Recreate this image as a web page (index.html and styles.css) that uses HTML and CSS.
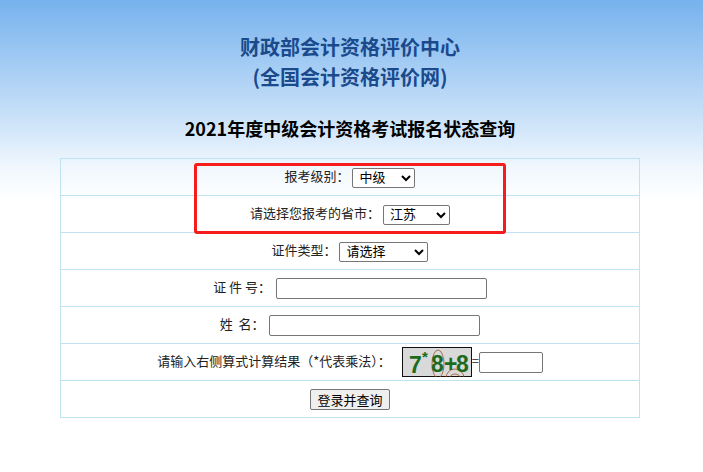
FILE: index.html
```html
<!DOCTYPE html>
<html lang="zh-CN">
<head>
    <meta charset="UTF-8">
    <title>2021年度中级会计资格考试报名状态查询</title>
    <link rel="stylesheet" href="styles.css">
</head>
<body>
    <div class="header">
        <h1>财政部会计资格评价中心</h1>
        <h1>(全国会计资格评价网)</h1>
        <h2>2021年度中级会计资格考试报名状态查询</h2>
    </div>

    <div class="form-wrap">
        <table class="form">
            <tr>
                <td>报考级别：
                    <select class="sel sel-level"><option>中级</option></select>
                </td>
            </tr>
            <tr>
                <td>请选择您报考的省市：
                    <select class="sel sel-prov"><option>江苏</option></select>
                </td>
            </tr>
            <tr>
                <td>证件类型：
                    <select class="sel sel-type"><option>请选择</option></select>
                </td>
            </tr>
            <tr>
                <td>证 件 号：
                    <input type="text" class="txt">
                </td>
            </tr>
            <tr>
                <td>姓&nbsp;&nbsp;名：
                    <input type="text" class="txt">
                </td>
            </tr>
            <tr>
                <td>请输入右侧算式计算结果（*代表乘法）：
                    <svg class="captcha" width="70" height="30" viewBox="0 0 70 30">
                        <rect x="0.5" y="0.5" width="69" height="29" fill="#d9d9d9" stroke="#111"/>
                        <ellipse cx="36" cy="17" rx="6" ry="14" fill="none" stroke="#a0522d" stroke-width="0.8"/>
                        <ellipse cx="53" cy="31" rx="9" ry="9" fill="none" stroke="#a0522d" stroke-width="0.8"/>
                        <ellipse cx="53" cy="33" rx="6" ry="6" fill="none" stroke="#a0522d" stroke-width="0.8"/>
                        <text x="7" y="26" class="cap-txt">7</text>
                        <text x="20" y="15" class="cap-star">*</text>
                        <text x="29" y="25" class="cap-txt">8</text>
                        <text x="42" y="25" class="cap-txt">+</text>
                        <text x="54" y="25" class="cap-txt">8</text>
                    </svg>=<input type="text" class="txt txt-code">
                </td>
            </tr>
            <tr>
                <td><button class="btn">登录并查询</button></td>
            </tr>
        </table>
        <div class="highlight"></div>
    </div>
</body>
</html>
```
FILE: styles.css
```css
body {
    margin: 0;
    padding-right: 3px;
    font-family: "Noto Sans CJK SC", "DejaVu Sans", sans-serif;
    font-size: 13px;
    color: #222;
    background: #fff linear-gradient(#76b2ed, #c4def8 110px, #f2f8fe 170px, #fff 200px) no-repeat;
    background-size: 100% 200px;
    min-height: 472px;
}
.header {
    padding-top: 32px;
    text-align: center;
}
.header h1 {
    margin: 0;
    font-size: 20px;
    line-height: 30px;
    color: #1a4a8c;
}
.header h2 {
    margin: 21px 0 15px;
    font-size: 18px;
    line-height: 30px;
    color: #000;
}
.form-wrap {
    position: relative;
    width: 580px;
    margin: 0 auto;
}
.form {
    width: 580px;
    border-collapse: collapse;
    border: 1px solid #bfe3f3;
}
.form td {
    height: 36px;
    padding: 0;
    text-align: center;
    border: 1px solid #bfe3f3;
    vertical-align: middle;
}
.sel {
    height: 20px;
    box-sizing: border-box;
    font-family: "Liberation Sans", "Noto Sans CJK SC", sans-serif;
    font-size: 13px;
    padding: 0 0 0 2px;
    border: 1px solid #767676;
    border-radius: 2px;
    background: #fff;
    color: #000;
    vertical-align: middle;
}
.sel-level { width: 63px; }
.sel-prov { width: 67px; }
.sel-type { width: 89px; }
.txt {
    width: 211px;
    height: 21px;
    box-sizing: border-box;
    border: 1px solid #767676;
    border-radius: 2px;
    vertical-align: middle;
    margin-left: 2px;
}
.txt-code {
    width: 64px;
    margin-left: 0;
}
.captcha {
    vertical-align: middle;
    margin-left: 8px;
}
.cap-txt {
    font-family: "Liberation Sans", sans-serif;
    font-size: 23px;
    font-weight: bold;
    fill: #1c6b1c;
}
.cap-star {
    font-family: "Liberation Sans", sans-serif;
    font-size: 15px;
    font-weight: bold;
    fill: #1c6b1c;
}
.btn {
    height: 21px;
    padding: 0 6px;
    font-family: "Noto Sans CJK SC", sans-serif;
    font-size: 13px;
    line-height: 17px;
    color: #000;
    background: #efefef;
    border: 1px solid #767676;
    border-radius: 2px;
}
.highlight {
    position: absolute;
    left: 134px;
    top: 5px;
    width: 306px;
    height: 65px;
    border: 3px solid #f61c1c;
    border-radius: 3px;
}
```
